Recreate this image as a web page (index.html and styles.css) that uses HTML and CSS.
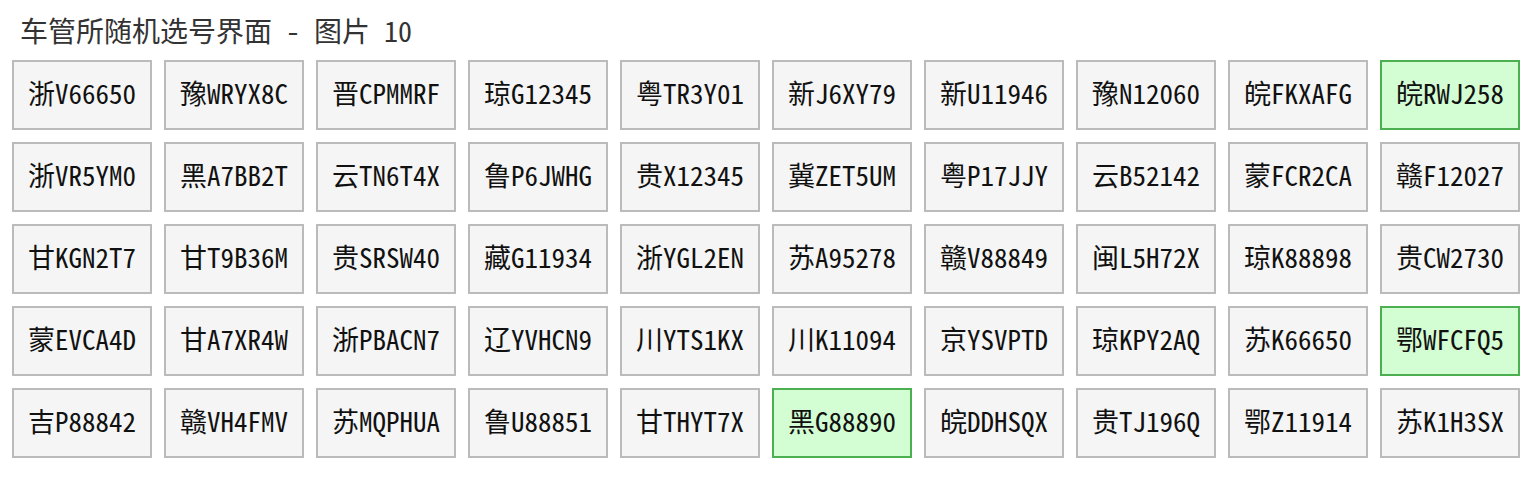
FILE: index.html
```html
<!DOCTYPE html>
<html lang="zh">
<head>
<meta charset="utf-8">
<link rel="stylesheet" href="styles.css">
</head>
<body>
<h1 class="title">车管所随机选号界面 - 图片 10</h1>
<div class="grid">
<div class="plate">浙V66650</div><div class="plate">豫WRYX8C</div><div class="plate">晋CPMMRF</div><div class="plate">琼G12345</div><div class="plate">粤TR3Y01</div><div class="plate">新J6XY79</div><div class="plate">新U11946</div><div class="plate">豫N12060</div><div class="plate">皖FKXAFG</div><div class="plate sel">皖RWJ258</div>
<div class="plate">浙VR5YM0</div><div class="plate">黑A7BB2T</div><div class="plate">云TN6T4X</div><div class="plate">鲁P6JWHG</div><div class="plate">贵X12345</div><div class="plate">冀ZET5UM</div><div class="plate">粤P17JJY</div><div class="plate">云B52142</div><div class="plate">蒙FCR2CA</div><div class="plate">赣F12027</div>
<div class="plate">甘KGN2T7</div><div class="plate">甘T9B36M</div><div class="plate">贵SRSW40</div><div class="plate">藏G11934</div><div class="plate">浙YGL2EN</div><div class="plate">苏A95278</div><div class="plate">赣V88849</div><div class="plate">闽L5H72X</div><div class="plate">琼K88898</div><div class="plate">贵CW2730</div>
<div class="plate">蒙EVCA4D</div><div class="plate">甘A7XR4W</div><div class="plate">浙PBACN7</div><div class="plate">辽YVHCN9</div><div class="plate">川YTS1KX</div><div class="plate">川K11094</div><div class="plate">京YSVPTD</div><div class="plate">琼KPY2AQ</div><div class="plate">苏K66650</div><div class="plate sel">鄂WFCFQ5</div>
<div class="plate">吉P88842</div><div class="plate">赣VH4FMV</div><div class="plate">苏MQPHUA</div><div class="plate">鲁U88851</div><div class="plate">甘THYT7X</div><div class="plate sel">黑G88890</div><div class="plate">皖DDHSQX</div><div class="plate">贵TJ196Q</div><div class="plate">鄂Z11914</div><div class="plate">苏K1H3SX</div>
</div>
</body>
</html>
```
FILE: styles.css
```css
html, body {
  margin: 0;
  padding: 0;
  background: #ffffff;
}
body {
  padding: 10px 12px 12px;
  font-family: "Noto Sans Mono CJK SC", "Noto Sans CJK SC", monospace;
  color: #111;
}
.title {
  margin: 0 0 10px 8px;
  font-size: 28px;
  font-weight: normal;
  line-height: 40px;
  color: #333;
}
.grid {
  display: grid;
  grid-template-columns: repeat(10, 140px);
  grid-auto-rows: 70px;
  gap: 12px;
}
.plate {
  box-sizing: border-box;
  border: 2px solid #bbbbbb;
  background: #f5f5f5;
  display: flex;
  align-items: center;
  justify-content: center;
  padding-bottom: 5px;
  font-size: 27px;
  line-height: 1;
  color: #111;
}
.plate.sel {
  background: #d3fdd3;
  border-color: #4caf50;
}
```
